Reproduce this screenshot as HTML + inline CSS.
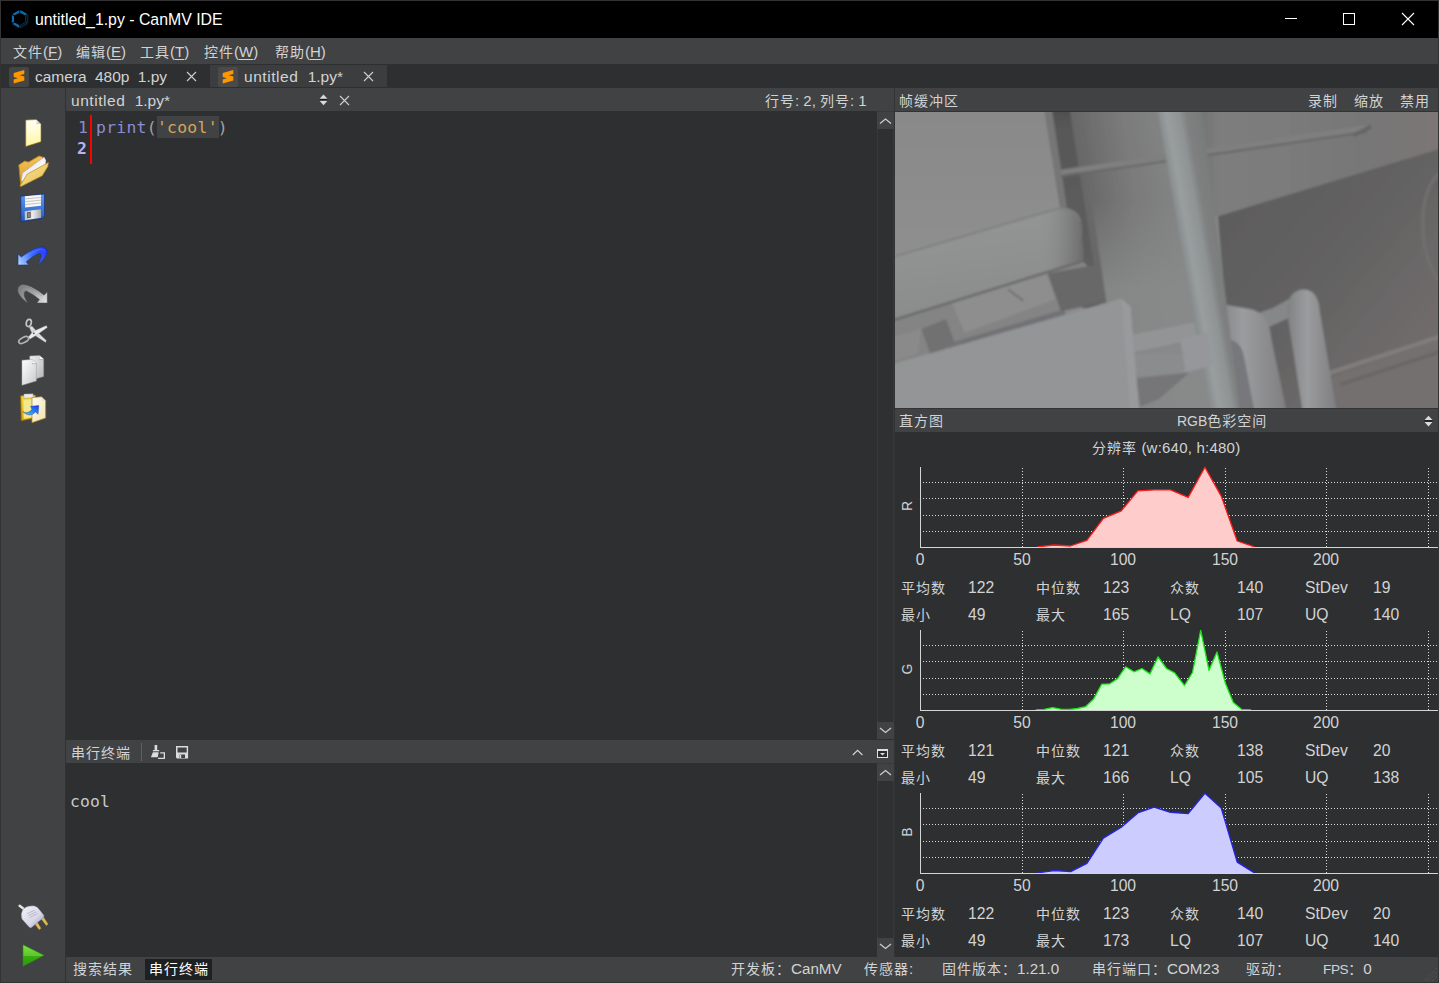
<!DOCTYPE html>
<html lang="zh-CN">
<head>
<meta charset="utf-8">
<title>untitled_1.py - CanMV IDE</title>
<style>
*{box-sizing:border-box;margin:0;padding:0}
html,body{width:1439px;height:983px;overflow:hidden;background:#2e2f30}
body{position:relative;font-family:"Liberation Sans","Noto Sans CJK SC",sans-serif;font-size:14px;color:#d0d0d0}
.abs{position:absolute}
.t{position:absolute;white-space:nowrap;line-height:20px;height:20px;color:#d2d3d4;font-size:15px}
.l{font-size:15.2px}
.mono{font-family:"DejaVu Sans Mono","Liberation Mono",monospace}
#win{position:absolute;left:0;top:0;width:1439px;height:983px;background:#2e2f30;overflow:hidden}
#titlebar{left:1px;top:1px;width:1437px;height:37px;background:#000}
#menubar{left:1px;top:38px;width:1437px;height:26px;background:#404244}
#tabbar{left:1px;top:64px;width:1437px;height:24px;background:#2e2f30}
#sidebar{left:1px;top:88px;width:65px;height:894px;background:#404244;border-right:1px solid #313234}
#edhead{left:66px;top:88px;width:828px;height:23px;background:#404244}
#editor{left:66px;top:111px;width:812px;height:629px;background:#2e2f30}
#termhead{left:66px;top:740px;width:828px;height:23px;background:#404244}
#term{left:66px;top:763px;width:812px;height:194px;background:#2e2f30}
#statusbar{left:66px;top:957px;width:1372px;height:25px;background:#404244}
#fbhead{left:895px;top:88px;width:543px;height:23px;background:#404244}
#fbimg{left:895px;top:112px;width:543px;height:296px;background:#8e8e8e;overflow:hidden}
#histhead{left:895px;top:409px;width:543px;height:23px;background:#404244}
#hist{left:895px;top:432px;width:543px;height:525px;background:#2e2f30}
.n{font-size:15.7px}
.c{font-size:14px;letter-spacing:1px}
.ax{width:60px;text-align:center}
.sb{background:#353637}
u{text-decoration-thickness:1px;text-underline-offset:2px}
</style>
</head>
<body>
<div id="win">
<!-- window frame -->
<div class="abs" style="left:0;top:0;width:1439px;height:983px;background:#333333"></div>
<div class="abs" id="titlebar"></div>
<div class="abs" id="menubar"></div>
<div class="abs" id="tabbar"></div>
<div class="abs" id="sidebar"></div>
<div class="abs" id="edhead"></div>
<div class="abs" id="editor"></div>
<div class="abs" id="termhead"></div>
<div class="abs" id="term"></div>
<div class="abs" id="fbhead"></div>
<div class="abs" id="fbimg"></div>
<div class="abs" id="histhead"></div>
<div class="abs" id="hist"></div>
<div class="abs" id="statusbar"></div>

<!-- TITLE BAR -->
<div class="t" id="title" style="left:35px;top:10px;font-size:15.85px;color:#fff">untitled_1.py - CanMV IDE</div>

<!-- MENU BAR -->
<div class="t" style="left:13px;top:42px"><span class="c">文件</span>(<u>F</u>)</div>
<div class="t" style="left:76px;top:42px"><span class="c">编辑</span>(<u>E</u>)</div>
<div class="t" style="left:140px;top:42px"><span class="c">工具</span>(<u>T</u>)</div>
<div class="t" style="left:204px;top:42px"><span class="c">控件</span>(<u>W</u>)</div>
<div class="t" style="left:275px;top:42px"><span class="c">帮助</span>(<u>H</u>)</div>

<!-- TABS -->
<div class="abs" style="left:210px;top:65px;width:177px;height:22px;background:#3c3d3f"></div>
<div class="abs" style="left:9px;top:67px;width:20px;height:20px;background:#454545;border-radius:2px"></div>
<div class="abs" style="left:218px;top:67px;width:20px;height:20px;background:#4a4a4b;border-radius:2px"></div>
<div class="t" id="tab1" style="left:35px;top:67px;font-size:15.5px;word-spacing:4px">camera 480p 1.py</div>
<div class="t" id="tab2" style="left:244px;top:67px;font-size:15.5px;word-spacing:5px"><span style="letter-spacing:.55px">untitled</span> 1.py*</div>

<!-- EDITOR HEADER -->
<div class="t" id="edname" style="left:71px;top:91px;font-size:15.5px;word-spacing:5px"><span style="letter-spacing:.55px">untitled</span> 1.py*</div>
<div class="t" id="linecol" style="left:765px;top:91px"><span class="c">行号</span>: 2, <span class="c">列号</span>: 1</div>

<!-- EDITOR -->
<div class="abs" style="left:90px;top:115px;width:2px;height:49px;background:#ff0000"></div>
<div class="abs" style="left:157px;top:116px;width:62px;height:22px;background:#414243"></div>
<div class="t mono" id="ln1" style="left:78px;top:117px;font-size:16.4px;line-height:22px;height:22px;color:#8a8ad0">1</div>
<div class="t mono" id="ln2" style="left:77px;top:138px;font-size:16.4px;line-height:22px;height:22px;color:#b4b4f0;font-weight:bold">2</div>
<div class="t mono" id="code" style="left:96px;top:117px;letter-spacing:.28px;font-size:16.4px;line-height:22px;height:22px;color:#8c8cd2">print<span style="color:#a0a2a4">(</span><span style="color:#d9a55a">'cool'</span><span style="color:#a0a2a4">)</span></div>

<!-- scrollbars -->

<!-- TERMINAL -->
<div class="t" id="termttl" style="left:71px;top:743px"><span class="c">串行终端</span></div>
<div class="t mono" id="termout" style="left:70px;top:791px;letter-spacing:.1px;font-size:16.4px;line-height:22px;height:22px;color:#c8c9ca">cool</div>

<!-- BOTTOM TABS / STATUS -->
<div class="abs" style="left:145px;top:959px;width:67px;height:21px;background:#1f2021"></div>
<div class="t" id="bt1" style="left:73px;top:959px"><span class="c">搜索结果</span></div>
<div class="t" id="bt2" style="left:149px;top:959px;color:#fff"><span class="c">串行终端</span></div>
<div class="t" id="st1" style="left:731px;top:959px"><span class="c">开发板：</span><span class="l">CanMV</span></div>
<div class="t" id="st2" style="left:864px;top:959px"><span class="c">传感器</span>:</div>
<div class="t" id="st3" style="left:942px;top:959px"><span class="c">固件版本：</span><span class="l">1.21.0</span></div>
<div class="t" id="st4" style="left:1092px;top:959px"><span class="c">串行端口：</span><span class="l">COM23</span></div>
<div class="t" id="st5" style="left:1246px;top:959px"><span class="c">驱动：</span></div>
<div class="t" id="st6" style="left:1323px;top:959px"><span style="font-size:13.6px;letter-spacing:-.4px">FPS</span><span class="c">：</span><span class="l">0</span></div>

<!-- FRAME BUFFER HEADER -->
<div class="t" id="fbttl" style="left:899px;top:91px"><span class="c">帧缓冲区</span></div>
<div class="t" id="fb1" style="left:1308px;top:91px"><span class="c">录制</span></div>
<div class="t" id="fb2" style="left:1354px;top:91px"><span class="c">缩放</span></div>
<div class="t" id="fb3" style="left:1400px;top:91px"><span class="c">禁用</span></div>

<!-- HISTOGRAM HEADER -->
<div class="t" id="hsttl" style="left:899px;top:411px"><span class="c">直方图</span></div>
<div class="t" id="hscs" style="left:1177px;top:411px"><span style="font-size:14px">RGB</span><span class="c">色彩空间</span></div>
<div class="t" id="hsres" style="left:1092px;top:438px;letter-spacing:.22px"><span class="c">分辨率</span> (w:640, h:480)</div>

<!-- CAM START -->
<!-- CAMERA IMAGE (frame buffer) -->
<svg class="abs" style="left:895px;top:112px" width="543" height="296" viewBox="0 0 1439 784" preserveAspectRatio="none">
<defs>
<filter id="cb" x="-5%" y="-5%" width="110%" height="110%"><feGaussianBlur stdDeviation="3.2"/></filter>
<linearGradient id="cPole" gradientUnits="userSpaceOnUse" x1="693" y1="0" x2="810" y2="-21"><stop offset="0" stop-color="#858a8b"/><stop offset=".2" stop-color="#999e9f"/><stop offset=".5" stop-color="#8f9394"/><stop offset=".64" stop-color="#7f8181"/><stop offset="1" stop-color="#787a7a"/></linearGradient>
<linearGradient id="cPipe" x1="0" y1="0" x2="1" y2="0"><stop offset="0" stop-color="#808183"/><stop offset=".4" stop-color="#9b9c9e"/><stop offset="1" stop-color="#7e7e80"/></linearGradient>
<linearGradient id="cMid" gradientUnits="userSpaceOnUse" x1="466" y1="0" x2="713" y2="-39"><stop offset="0" stop-color="#676767"/><stop offset=".5" stop-color="#7a7a7a"/><stop offset="1" stop-color="#838484"/></linearGradient>
<linearGradient id="cDark" x1="0" y1="0" x2="1" y2="1"><stop offset="0" stop-color="#5a5a5a"/><stop offset=".5" stop-color="#646363"/><stop offset="1" stop-color="#787171"/></linearGradient>
<linearGradient id="cShelf" x1="0" y1="0" x2="1" y2="0"><stop offset="0" stop-color="#6c6c6c"/><stop offset=".12" stop-color="#7e7e7e"/><stop offset=".7" stop-color="#777777"/><stop offset="1" stop-color="#7c7676"/></linearGradient>
<linearGradient id="cBand" x1="0" y1="0" x2="0.25" y2="1"><stop offset="0" stop-color="#959696"/><stop offset=".5" stop-color="#909191"/><stop offset="1" stop-color="#8a8b8b"/></linearGradient>
<linearGradient id="cBandEnd" x1="0" y1="0" x2="1" y2="0"><stop offset="0" stop-color="#909191" stop-opacity="0"/><stop offset="1" stop-color="#6c6c6c"/></linearGradient>
<linearGradient id="cGap" x1="0" y1="0" x2="0" y2="1"><stop offset="0" stop-color="#4c4c4c"/><stop offset=".12" stop-color="#585858"/><stop offset="1" stop-color="#606060"/></linearGradient>
<linearGradient id="cWall" x1="0" y1="0" x2="0" y2="1"><stop offset="0" stop-color="#898989"/><stop offset="1" stop-color="#8f8f8f"/></linearGradient>
<linearGradient id="cMidL" gradientUnits="userSpaceOnUse" x1="0" y1="230" x2="0" y2="470"><stop offset="0" stop-color="#8a8b8b" stop-opacity="0"/><stop offset="1" stop-color="#8a8b8b" stop-opacity=".85"/></linearGradient>
<clipPath id="camClip"><rect x="0" y="0" width="1439" height="784"/></clipPath>
</defs>
<g clip-path="url(#camClip)">
<rect x="0" y="0" width="1439" height="784" fill="#8a8a8a"/>
<g filter="url(#cb)">
<!-- left wall -->
<path d="M-20,-20 L405,-20 L448,260 L-20,395 Z" fill="url(#cWall)"/>
<!-- middle wall -->
<path d="M455,-20 L720,-20 L880,804 L630,804 L540,500 Z" fill="url(#cMid)"/>
<path d="M520,230 L740,230 L850,804 L630,804 L560,500 Z" fill="url(#cMidL)"/>
<!-- gap -->
<path d="M394,-20 L461,-20 L545,520 L497,520 L438,255 Z" fill="url(#cGap)"/>
<path d="M394,-20 L414,-20 L456,255 L438,255 Z" fill="#767676"/>
<!-- shelf upper right -->
<path d="M780,-20 L1460,-20 L1460,92 L856,276 L830,270 Z" fill="url(#cShelf)"/>
<!-- dark region below shelf -->
<path d="M856,276 L1460,92 L1460,804 L900,804 Z" fill="url(#cDark)"/>
<!-- lower-right lighter wedge under ridge -->
<path d="M1160,700 L1460,598 L1460,804 L1100,804 Z" fill="#756f6f"/>
<path d="M1150,692 L1460,590" stroke="#807d7d" stroke-width="12" fill="none"/>
<path d="M1180,722 L1460,630" stroke="#696565" stroke-width="8" fill="none"/>
<!-- cable far right -->
<path d="M1460,150 Q1390,190 1400,330 Q1410,420 1460,470" stroke="#716e6e" stroke-width="9" fill="none"/>
<!-- rod -->
<path d="M440,160 L1250,42" stroke="#7f7f7f" stroke-width="14" fill="none"/>
<path d="M440,171 L1250,53" stroke="#686868" stroke-width="5" fill="none"/>
<path d="M1215,62 L1262,38" stroke="#656565" stroke-width="10" fill="none"/>
<!-- U pipes -->
<path d="M880,596 L960,600 L1000,804 L900,804 Z" fill="#77777b"/>
<path d="M880,560 L1000,520 L1090,470 L1100,520 L900,610 Z" fill="#868789"/>
<path d="M845,505 L940,522 Q992,532 997,600 L1040,804 L955,804 L925,650 Q918,605 880,602 L850,604 Z" fill="url(#cPipe)"/>
<path d="M1039,530 Q1040,470 1085,470 Q1122,472 1126,530 L1172,804 L1082,804 Z" fill="url(#cPipe)"/>
<!-- horizontal pipes to board -->
<path d="M630,590 L800,556 L806,600 L634,636 Z" fill="#939496"/>
<path d="M632,640 L790,640 L792,690 L640,700 Z" fill="#8b8c8e"/>
<path d="M640,705 L780,690 L700,760 L650,780 Z" fill="#767678"/>
<!-- main pole (incl. darker right part) -->
<path d="M693,-20 L812,-20 L916,804 L836,804 Z" fill="url(#cPole)"/>
<!-- clamp -->
<path d="M756,600 L830,585 L842,670 L770,690 Z" fill="#96979a"/>
<!-- mattress band -->
<path d="M-20,390 L430,258 Q488,250 494,300 L498,395 L-20,556 Z" fill="url(#cBand)"/>
<path d="M380,275 L430,258 Q488,250 494,300 L498,395 L380,432 Z" fill="url(#cBandEnd)"/>
<path d="M-20,388 L430,256 Q480,250 492,290" stroke="#7c7c7c" stroke-width="4" fill="none"/>
<!-- sheet -->
<path d="M-20,556 L498,395 L532,432 L540,500 L-20,672 Z" fill="#848484"/>
<path d="M150,505 L400,424 L425,496 L185,585 Z" fill="#8e8e8e"/>
<path d="M-20,600 L70,575 L60,640 L-20,665 Z" fill="#8a8a8a"/>
<path d="M70,575 L135,548 L160,615 L95,645 Z" fill="#717171"/>
<path d="M140,622 L450,530" stroke="#727276" stroke-width="16" fill="none"/>
<path d="M405,428 L530,405 L542,505 L440,528 Z" fill="#676767"/>
<path d="M300,470 L340,500" stroke="#707070" stroke-width="5" fill="none"/>
<path d="M-20,556 L498,395" stroke="#6c6c6c" stroke-width="7" fill="none"/>
<!-- board -->
<path d="M-20,672 L600,494 L624,516 L648,804 L-20,804 Z" fill="#939596"/>
<path d="M600,494 L624,516 L648,804 L624,804 Z" fill="#999a9c"/>
</g>
</g>
</svg>
<!-- CAM END -->

<!-- HIST START -->
<svg class="abs" style="left:895px;top:432px" width="543" height="525" viewBox="895 432 543 525" shape-rendering="crispEdges">
<line x1="923" y1="482.5" x2="1438" y2="482.5" stroke="#dcdcdc" stroke-width="1" stroke-dasharray="1 2"/>
<line x1="923" y1="498.5" x2="1438" y2="498.5" stroke="#dcdcdc" stroke-width="1" stroke-dasharray="1 2"/>
<line x1="923" y1="515.5" x2="1438" y2="515.5" stroke="#dcdcdc" stroke-width="1" stroke-dasharray="1 2"/>
<line x1="923" y1="531.5" x2="1438" y2="531.5" stroke="#dcdcdc" stroke-width="1" stroke-dasharray="1 2"/>
<line x1="1022.5" y1="468" x2="1022.5" y2="547" stroke="#dcdcdc" stroke-width="1" stroke-dasharray="1 2"/>
<line x1="1123.5" y1="468" x2="1123.5" y2="547" stroke="#dcdcdc" stroke-width="1" stroke-dasharray="1 2"/>
<line x1="1225.5" y1="468" x2="1225.5" y2="547" stroke="#dcdcdc" stroke-width="1" stroke-dasharray="1 2"/>
<line x1="1326.5" y1="468" x2="1326.5" y2="547" stroke="#dcdcdc" stroke-width="1" stroke-dasharray="1 2"/>
<line x1="1428.5" y1="468" x2="1428.5" y2="547" stroke="#dcdcdc" stroke-width="1" stroke-dasharray="1 2"/>
<path d="M1037.4,546.9 L1054.2,545.0 L1070.4,546.0 L1086.9,540.3 L1103.4,518.4 L1121.3,510.9 L1137.8,490.8 L1154.1,489.9 L1170.5,489.9 L1188.2,497.4 L1204.9,467.3 L1221.2,496.1 L1237.2,541.0 L1254.5,546.9 Z" fill="#ffcccc" stroke="none" shape-rendering="geometricPrecision"/>
<path d="M1037.4,546.9 L1054.2,545.0 L1070.4,546.0 L1086.9,540.3 L1103.4,518.4 L1121.3,510.9 L1137.8,490.8 L1154.1,489.9 L1170.5,489.9 L1188.2,497.4 L1204.9,467.3 L1221.2,496.1 L1237.2,541.0 L1254.5,546.9" fill="none" stroke="#ff1a1a" stroke-width="1.3" stroke-linejoin="round" shape-rendering="geometricPrecision"/>
<rect x="920" y="467" width="1" height="81" fill="#d4d4d4"/>
<rect x="920" y="547" width="518" height="1" fill="#d4d4d4"/>
<line x1="923" y1="645.5" x2="1438" y2="645.5" stroke="#dcdcdc" stroke-width="1" stroke-dasharray="1 2"/>
<line x1="923" y1="661.5" x2="1438" y2="661.5" stroke="#dcdcdc" stroke-width="1" stroke-dasharray="1 2"/>
<line x1="923" y1="678.5" x2="1438" y2="678.5" stroke="#dcdcdc" stroke-width="1" stroke-dasharray="1 2"/>
<line x1="923" y1="694.5" x2="1438" y2="694.5" stroke="#dcdcdc" stroke-width="1" stroke-dasharray="1 2"/>
<line x1="1022.5" y1="631" x2="1022.5" y2="710" stroke="#dcdcdc" stroke-width="1" stroke-dasharray="1 2"/>
<line x1="1123.5" y1="631" x2="1123.5" y2="710" stroke="#dcdcdc" stroke-width="1" stroke-dasharray="1 2"/>
<line x1="1225.5" y1="631" x2="1225.5" y2="710" stroke="#dcdcdc" stroke-width="1" stroke-dasharray="1 2"/>
<line x1="1326.5" y1="631" x2="1326.5" y2="710" stroke="#dcdcdc" stroke-width="1" stroke-dasharray="1 2"/>
<line x1="1428.5" y1="631" x2="1428.5" y2="710" stroke="#dcdcdc" stroke-width="1" stroke-dasharray="1 2"/>
<path d="M1035.6,709.9 L1044.3,709.3 L1052.5,707.6 L1060.8,709.2 L1069.2,709.5 L1077.3,708.5 L1085.5,706.7 L1093.7,698.9 L1101.7,684.2 L1109.8,683.8 L1117.6,678.6 L1125.6,666.8 L1134.0,671.8 L1142.0,668.5 L1150.0,673.9 L1158.1,656.9 L1166.5,668.5 L1174.6,672.9 L1184.5,685.5 L1192.5,672.5 L1200.7,630.3 L1209.0,670.3 L1217.0,652.0 L1225.4,683.3 L1233.3,702.4 L1241.5,709.3 L1251.1,709.9 Z" fill="#ccffcc" stroke="none" shape-rendering="geometricPrecision"/>
<path d="M1035.6,709.9 L1044.3,709.3 L1052.5,707.6 L1060.8,709.2 L1069.2,709.5 L1077.3,708.5 L1085.5,706.7 L1093.7,698.9 L1101.7,684.2 L1109.8,683.8 L1117.6,678.6 L1125.6,666.8 L1134.0,671.8 L1142.0,668.5 L1150.0,673.9 L1158.1,656.9 L1166.5,668.5 L1174.6,672.9 L1184.5,685.5 L1192.5,672.5 L1200.7,630.3 L1209.0,670.3 L1217.0,652.0 L1225.4,683.3 L1233.3,702.4 L1241.5,709.3 L1251.1,709.9" fill="none" stroke="#19e619" stroke-width="1.3" stroke-linejoin="round" shape-rendering="geometricPrecision"/>
<rect x="920" y="630" width="1" height="81" fill="#d4d4d4"/>
<rect x="920" y="710" width="518" height="1" fill="#d4d4d4"/>
<line x1="923" y1="808.5" x2="1438" y2="808.5" stroke="#dcdcdc" stroke-width="1" stroke-dasharray="1 2"/>
<line x1="923" y1="824.5" x2="1438" y2="824.5" stroke="#dcdcdc" stroke-width="1" stroke-dasharray="1 2"/>
<line x1="923" y1="841.5" x2="1438" y2="841.5" stroke="#dcdcdc" stroke-width="1" stroke-dasharray="1 2"/>
<line x1="923" y1="857.5" x2="1438" y2="857.5" stroke="#dcdcdc" stroke-width="1" stroke-dasharray="1 2"/>
<line x1="1022.5" y1="794" x2="1022.5" y2="873" stroke="#dcdcdc" stroke-width="1" stroke-dasharray="1 2"/>
<line x1="1123.5" y1="794" x2="1123.5" y2="873" stroke="#dcdcdc" stroke-width="1" stroke-dasharray="1 2"/>
<line x1="1225.5" y1="794" x2="1225.5" y2="873" stroke="#dcdcdc" stroke-width="1" stroke-dasharray="1 2"/>
<line x1="1326.5" y1="794" x2="1326.5" y2="873" stroke="#dcdcdc" stroke-width="1" stroke-dasharray="1 2"/>
<line x1="1428.5" y1="794" x2="1428.5" y2="873" stroke="#dcdcdc" stroke-width="1" stroke-dasharray="1 2"/>
<path d="M1037.4,872.9 L1054.2,870.6 L1070.7,871.6 L1086.9,863.3 L1103.4,838.1 L1121.3,827.3 L1137.8,812.9 L1154.1,807.2 L1170.5,812.4 L1188.2,813.6 L1204.9,793.3 L1221.2,808.1 L1237.2,862.1 L1254.5,872.9 Z" fill="#ccccff" stroke="none" shape-rendering="geometricPrecision"/>
<path d="M1037.4,872.9 L1054.2,870.6 L1070.7,871.6 L1086.9,863.3 L1103.4,838.1 L1121.3,827.3 L1137.8,812.9 L1154.1,807.2 L1170.5,812.4 L1188.2,813.6 L1204.9,793.3 L1221.2,808.1 L1237.2,862.1 L1254.5,872.9" fill="none" stroke="#2222ee" stroke-width="1.3" stroke-linejoin="round" shape-rendering="geometricPrecision"/>
<rect x="920" y="793" width="1" height="81" fill="#d4d4d4"/>
<rect x="920" y="873" width="518" height="1" fill="#d4d4d4"/>
</svg>
<div class="t" style="left:897px;top:496px;width:20px;text-align:center;transform:rotate(-90deg);font-size:14px">R</div>
<div class="t ax n" style="left:890px;top:550px">0</div>
<div class="t ax n" style="left:992px;top:550px">50</div>
<div class="t ax n" style="left:1093px;top:550px">100</div>
<div class="t ax n" style="left:1195px;top:550px">150</div>
<div class="t ax n" style="left:1296px;top:550px">200</div>
<div class="t" style="left:897px;top:659px;width:20px;text-align:center;transform:rotate(-90deg);font-size:14px">G</div>
<div class="t ax n" style="left:890px;top:713px">0</div>
<div class="t ax n" style="left:992px;top:713px">50</div>
<div class="t ax n" style="left:1093px;top:713px">100</div>
<div class="t ax n" style="left:1195px;top:713px">150</div>
<div class="t ax n" style="left:1296px;top:713px">200</div>
<div class="t" style="left:897px;top:822px;width:20px;text-align:center;transform:rotate(-90deg);font-size:14px">B</div>
<div class="t ax n" style="left:890px;top:876px">0</div>
<div class="t ax n" style="left:992px;top:876px">50</div>
<div class="t ax n" style="left:1093px;top:876px">100</div>
<div class="t ax n" style="left:1195px;top:876px">150</div>
<div class="t ax n" style="left:1296px;top:876px">200</div>
<div class="t" style="left:901px;top:578px"><span class="c">平均数</span></div>
<div class="t n" style="left:968px;top:578px">122</div>
<div class="t" style="left:901px;top:605px"><span class="c">最小</span></div>
<div class="t n" style="left:968px;top:605px">49</div>
<div class="t" style="left:1036px;top:578px"><span class="c">中位数</span></div>
<div class="t n" style="left:1103px;top:578px">123</div>
<div class="t" style="left:1036px;top:605px"><span class="c">最大</span></div>
<div class="t n" style="left:1103px;top:605px">165</div>
<div class="t" style="left:1170px;top:578px"><span class="c">众数</span></div>
<div class="t n" style="left:1237px;top:578px">140</div>
<div class="t n" style="left:1170px;top:605px">LQ</div>
<div class="t n" style="left:1237px;top:605px">107</div>
<div class="t n" style="left:1305px;top:578px">StDev</div>
<div class="t n" style="left:1373px;top:578px">19</div>
<div class="t n" style="left:1305px;top:605px">UQ</div>
<div class="t n" style="left:1373px;top:605px">140</div>
<div class="t" style="left:901px;top:741px"><span class="c">平均数</span></div>
<div class="t n" style="left:968px;top:741px">121</div>
<div class="t" style="left:901px;top:768px"><span class="c">最小</span></div>
<div class="t n" style="left:968px;top:768px">49</div>
<div class="t" style="left:1036px;top:741px"><span class="c">中位数</span></div>
<div class="t n" style="left:1103px;top:741px">121</div>
<div class="t" style="left:1036px;top:768px"><span class="c">最大</span></div>
<div class="t n" style="left:1103px;top:768px">166</div>
<div class="t" style="left:1170px;top:741px"><span class="c">众数</span></div>
<div class="t n" style="left:1237px;top:741px">138</div>
<div class="t n" style="left:1170px;top:768px">LQ</div>
<div class="t n" style="left:1237px;top:768px">105</div>
<div class="t n" style="left:1305px;top:741px">StDev</div>
<div class="t n" style="left:1373px;top:741px">20</div>
<div class="t n" style="left:1305px;top:768px">UQ</div>
<div class="t n" style="left:1373px;top:768px">138</div>
<div class="t" style="left:901px;top:904px"><span class="c">平均数</span></div>
<div class="t n" style="left:968px;top:904px">122</div>
<div class="t" style="left:901px;top:931px"><span class="c">最小</span></div>
<div class="t n" style="left:968px;top:931px">49</div>
<div class="t" style="left:1036px;top:904px"><span class="c">中位数</span></div>
<div class="t n" style="left:1103px;top:904px">123</div>
<div class="t" style="left:1036px;top:931px"><span class="c">最大</span></div>
<div class="t n" style="left:1103px;top:931px">173</div>
<div class="t" style="left:1170px;top:904px"><span class="c">众数</span></div>
<div class="t n" style="left:1237px;top:904px">140</div>
<div class="t n" style="left:1170px;top:931px">LQ</div>
<div class="t n" style="left:1237px;top:931px">107</div>
<div class="t n" style="left:1305px;top:904px">StDev</div>
<div class="t n" style="left:1373px;top:904px">20</div>
<div class="t n" style="left:1305px;top:931px">UQ</div>
<div class="t n" style="left:1373px;top:931px">140</div>
<!-- HIST END -->

<!-- ICONS START -->
<!-- SIDEBAR ICONS -->
<svg class="abs" style="left:9px;top:112px" width="48" height="120" viewBox="0 0 393 983">
<defs>
<linearGradient id="gNew" x1="0" y1="0" x2="0" y2="1"><stop offset="0" stop-color="#fffff6"/><stop offset=".5" stop-color="#fffbd0"/><stop offset="1" stop-color="#fdf5a2"/></linearGradient>
<linearGradient id="gFold" x1="0" y1="0" x2="1" y2="1"><stop offset="0" stop-color="#f4f4ee"/><stop offset="1" stop-color="#b9b9b2"/></linearGradient>
<linearGradient id="gFoBack" x1="0" y1="0" x2="0" y2="1"><stop offset="0" stop-color="#f2c35a"/><stop offset="1" stop-color="#dc9a2c"/></linearGradient>
<linearGradient id="gFoFront" x1="0" y1="0" x2="1" y2="1"><stop offset="0" stop-color="#f5e08e"/><stop offset="1" stop-color="#e6c258"/></linearGradient>
<linearGradient id="gPaper" x1="0" y1="0" x2="1" y2="1"><stop offset="0" stop-color="#c9cad4"/><stop offset=".5" stop-color="#f4f4f8"/><stop offset="1" stop-color="#ffffff"/></linearGradient>
<linearGradient id="gSave" x1="0" y1="0" x2="0" y2="1"><stop offset="0" stop-color="#5b9af0"/><stop offset="1" stop-color="#2359bd"/></linearGradient>
<linearGradient id="gShut" x1="0" y1="0" x2="1" y2="0"><stop offset="0" stop-color="#bdbdbd"/><stop offset=".5" stop-color="#ececec"/><stop offset="1" stop-color="#a9a9a9"/></linearGradient>
</defs>
<!-- new -->
<path d="M137,66 L222,62 L262,98 L262,243 L137,283 Z" fill="url(#gNew)" stroke="#a0700e" stroke-width="5" stroke-linejoin="round"/>
<path d="M222,64 L224,101 L260,99 Z" fill="url(#gFold)"/>
<!-- open -->
<path d="M80,434 L128,402 L160,410 L246,360 L276,368 L276,470 L96,602 Z" fill="url(#gFoBack)" stroke="#b57a12" stroke-width="7" stroke-linejoin="round"/>
<path d="M110,500 L288,368 L302,396 L298,440 L128,566 L100,568 Z" fill="url(#gPaper)" stroke="#9a9aa6" stroke-width="3"/>
<path d="M90,604 L150,508 L322,414 L318,446 L272,522 L98,610 Z" fill="url(#gFoFront)" stroke="#c28c1c" stroke-width="6" stroke-linejoin="round"/>
<!-- save -->
<path d="M96,690 L290,672 L292,850 L270,872 L98,900 Z" fill="url(#gSave)" stroke="#1b2f78" stroke-width="6" stroke-linejoin="round"/>
<path d="M130,690 L262,678 L262,768 L132,782 Z" fill="#f6f6f6"/>
<path d="M132,712 L262,700 M132,735 L262,722 M132,758 L262,745" stroke="#a8a8a8" stroke-width="5" fill="none"/>
<path d="M128,812 L262,796 L262,866 L130,886 Z" fill="url(#gShut)"/>
<path d="M148,822 L178,818 L178,866 L148,870 Z" fill="#5a5a5a"/>
<path d="M156,828 L170,826 L170,860 L156,862 Z" fill="#8c8c8c"/>
</svg>

<svg class="abs" style="left:9px;top:236px" width="48" height="120" viewBox="0 0 393 983">
<defs>
<linearGradient id="gUndo" x1="1" y1="0" x2="0" y2="1"><stop offset="0" stop-color="#1f3cff"/><stop offset=".55" stop-color="#3f7bff"/><stop offset="1" stop-color="#a8d6ff"/></linearGradient>
<linearGradient id="gRedo" x1="0" y1="0" x2="1" y2="1"><stop offset="0" stop-color="#7d7d7d"/><stop offset=".55" stop-color="#a9a9a9"/><stop offset="1" stop-color="#e2e2e2"/></linearGradient>
<linearGradient id="gSc" x1="0" y1="0" x2="1" y2="1"><stop offset="0" stop-color="#f2f2f2"/><stop offset="1" stop-color="#9c9c9c"/></linearGradient>
</defs>
<!-- scissors -->
<g fill="none" stroke-linecap="round">
<ellipse cx="162" cy="712" rx="20" ry="30" stroke="#c4c4c4" stroke-width="14" transform="rotate(14 162 712)"/>
<ellipse cx="120" cy="852" rx="44" ry="21" stroke="#b2b2b2" stroke-width="14" transform="rotate(-27 120 852)"/>
</g>
<path d="M166,748 L190,800 L300,872 L306,856 L222,776 L188,738 Z" fill="#dedede" stroke="#8a8a8a" stroke-width="3"/>
<path d="M160,826 L196,782 L306,734 L314,750 L224,812 L170,846 Z" fill="#ececec" stroke="#8a8a8a" stroke-width="3"/>
<circle cx="203" cy="797" r="7" fill="#444"/>
</svg>

<svg class="abs" style="left:12px;top:240px" width="42" height="70" viewBox="0 0 590 983">
<defs>
<linearGradient id="gUndo2" gradientUnits="userSpaceOnUse" x1="480" y1="90" x2="90" y2="350"><stop offset="0" stop-color="#2030ff"/><stop offset=".5" stop-color="#3b6cff"/><stop offset="1" stop-color="#b4dcff"/></linearGradient>
<linearGradient id="gRedo2" gradientUnits="userSpaceOnUse" x1="100" y1="620" x2="490" y2="885"><stop offset="0" stop-color="#7a7a7a"/><stop offset=".5" stop-color="#a4a4a4"/><stop offset="1" stop-color="#e6e6e6"/></linearGradient>
</defs>
<path d="M85,195 L85,350 L235,350 L200,305 Q290,225 375,188 Q420,180 405,250 Q390,310 350,355 Q450,290 490,200 Q510,120 440,95 Q330,85 130,240 Z" fill="url(#gUndo2)" stroke="#1d2a66" stroke-width="7" stroke-linejoin="round"/>
<path d="M150,262 Q290,160 400,128 Q455,125 462,170" fill="none" stroke="#7fa6ff" stroke-width="10" opacity=".55"/>
<path d="M495,730 L495,885 L350,885 L385,835 Q295,762 205,718 Q165,712 172,785 Q190,845 225,885 Q125,825 85,735 Q65,650 140,625 Q250,615 450,775 Z" fill="url(#gRedo2)" stroke="#4e4e4e" stroke-width="7" stroke-linejoin="round"/>
<path d="M120,700 Q130,650 190,655 Q300,680 430,790" fill="none" stroke="#6e6e6e" stroke-width="10" opacity=".5"/>
</svg>
<svg class="abs" style="left:9px;top:346px" width="48" height="120" viewBox="0 0 393 983">
<defs>
<linearGradient id="gCp" x1="0" y1="0" x2="1" y2="1"><stop offset="0" stop-color="#ffffff"/><stop offset="1" stop-color="#c9c9c9"/></linearGradient>
<linearGradient id="gCp2" x1="0" y1="0" x2="1" y2="1"><stop offset="0" stop-color="#f0f0f0"/><stop offset="1" stop-color="#b5b5b5"/></linearGradient>
<linearGradient id="gClip" x1="0" y1="0" x2="0" y2="1"><stop offset="0" stop-color="#f7dc3a"/><stop offset="1" stop-color="#d8a00e"/></linearGradient>
<linearGradient id="gPg" x1="0" y1="0" x2="1" y2="1"><stop offset="0" stop-color="#fffdf0"/><stop offset="1" stop-color="#efe2ae"/></linearGradient>
<linearGradient id="gArr" x1="0" y1="1" x2="1" y2="0"><stop offset="0" stop-color="#3fd0ff"/><stop offset="1" stop-color="#1a3cf0"/></linearGradient>
</defs>
<!-- copy -->
<path d="M170,82 L250,78 L284,106 L284,250 L172,282 Z" fill="url(#gCp2)" stroke="#8f8f8f" stroke-width="4" stroke-linejoin="round"/>
<path d="M250,80 L250,116 L284,114 Z" fill="#a8a8a8"/><path d="M250,80 L252,108 L282,107 Z" fill="#fbfbfb"/>
<path d="M106,116 L190,110 L224,140 L224,286 L106,322 Z" fill="url(#gCp)" stroke="#9a9a9a" stroke-width="4" stroke-linejoin="round"/>
<path d="M190,112 L190,150 L224,148 Z" fill="#b0b0b0"/><path d="M190,112 L192,142 L222,141 Z" fill="#fafafa"/>
<!-- paste -->
<path d="M96,408 L216,402 L216,590 L100,612 Z" fill="url(#gClip)" stroke="#9a6a08" stroke-width="7" stroke-linejoin="round"/>
<path d="M118,440 L196,436 L196,584 L120,598 Z" fill="#f3e88c"/>
<path d="M122,394 L198,392 L198,424 L122,428 Z" fill="#ececec" stroke="#8a8a8a" stroke-width="3"/>
<path d="M188,422 L266,416 L300,446 L300,590 L188,628 Z" fill="url(#gPg)" stroke="#ae8224" stroke-width="6" stroke-linejoin="round"/>
<path d="M266,418 L268,448 L298,447 Z" fill="#e2dccc"/>
<path d="M112,538 Q150,560 190,520 L176,494 L244,488 L238,560 L218,540 Q170,592 112,538 Z" fill="url(#gArr)" stroke="#1b2f8a" stroke-width="3" stroke-linejoin="round"/>
</svg>

<svg class="abs" style="left:9px;top:890px" width="48" height="93" viewBox="0 0 507 982">
<defs>
<linearGradient id="gPlug" x1="0" y1="0" x2="1" y2="1"><stop offset="0" stop-color="#f4f4fa"/><stop offset=".6" stop-color="#d6d6e6"/><stop offset="1" stop-color="#8e8eaa"/></linearGradient>
<linearGradient id="gRun" x1="0" y1="0" x2="0" y2="1"><stop offset="0" stop-color="#7fe04a"/><stop offset=".5" stop-color="#5cc82a"/><stop offset=".52" stop-color="#3aae10"/><stop offset="1" stop-color="#2c960a"/></linearGradient>
</defs>
<!-- plug -->
<path d="M112,166 L150,196" stroke="#e2e2e6" stroke-width="26" stroke-linecap="round"/>
<path d="M262,344 L318,420 L338,404 L292,326 Z" fill="#e0bd5c" stroke="#a8862c" stroke-width="4"/>
<path d="M336,302 L396,378 L412,358 L364,284 Z" fill="#e0bd5c" stroke="#a8862c" stroke-width="4"/>
<path d="M150,200 Q200,160 270,168 Q300,172 322,208 L370,268 L366,290 L232,402 L214,394 L136,306 Q118,250 150,200 Z" fill="url(#gPlug)" stroke="#7a7a92" stroke-width="4" stroke-linejoin="round"/>
<path d="M190,250 L270,214 M204,270 L286,232 M218,290 L300,250" stroke="#9c9cae" stroke-width="6"/>
<!-- run -->
<path d="M148,578 L148,806 L370,690 Z" fill="url(#gRun)" stroke="#2a8a0a" stroke-width="6" stroke-linejoin="round"/>
</svg>
<!-- ICONS END -->

<!-- UI START -->
<!-- TITLE ICON + WINDOW CONTROLS -->
<svg class="abs" style="left:0;top:1px" width="40" height="37" viewBox="0 1 40 37">
<polygon points="20.36,10.12 27.21,14.08 25.12,15.47 20.20,12.63" fill="#1069a8"/>
<polygon points="27.77,15.04 27.77,22.96 25.52,21.84 25.52,16.16" fill="#02121d" stroke="#0b3f63" stroke-width=".7"/>
<polygon points="27.21,23.92 20.36,27.88 20.20,25.37 25.12,22.53" fill="#02121d" stroke="#0b3f63" stroke-width=".7"/>
<polygon points="19.24,27.88 12.39,23.92 14.48,22.53 19.40,25.37" fill="#1069a8"/>
<polygon points="11.83,22.96 11.83,15.04 14.08,16.16 14.08,21.84" fill="#1069a8"/>
<polygon points="12.39,14.08 19.24,10.12 19.40,12.63 14.48,15.47" fill="#1069a8"/>
</svg>
<svg class="abs" style="left:1280px;top:8px" width="140" height="24" viewBox="1280 8 140 24" shape-rendering="crispEdges">
<rect x="1285" y="18" width="12" height="1" fill="#fff"/>
<rect x="1343.5" y="13.500" width="11" height="11" fill="none" stroke="#fff" stroke-width="1"/>
<path d="M1402,13 L1414,25 M1414,13 L1402,25" stroke="#fff" stroke-width="1.1" shape-rendering="geometricPrecision"/>
</svg>

<!-- TAB ICONS + CLOSE -->
<svg class="abs" style="left:0;top:64px" width="400" height="48" viewBox="0 64 400 48">
<g transform="translate(13.7,70)"><path d="M0.00,3.10 L10.60,0.00 L10.60,3.91 L5.83,5.32 L10.60,6.48 L10.60,10.39 L0.00,13.50 L0.00,9.58 L4.20,8.36 L0.00,7.02 Z" fill="#ff9800"/></g>
<g transform="translate(222.7,70)"><path d="M0.00,3.10 L10.60,0.00 L10.60,3.91 L5.83,5.32 L10.60,6.48 L10.60,10.39 L0.00,13.50 L0.00,9.58 L4.20,8.36 L0.00,7.02 Z" fill="#ff9800"/></g>
<g transform="translate(191.5,76.5)"><path d="M-4.5,-4.5 L4.5,4.5 M4.5,-4.5 L-4.5,4.500" stroke="#cfcfcf" stroke-width="1.1" fill="none"/></g>
<g transform="translate(368.5,76.5)"><path d="M-4.5,-4.5 L4.5,4.5 M4.5,-4.5 L-4.5,4.500" stroke="#cfcfcf" stroke-width="1.1" fill="none"/></g>
<g transform="translate(323.5,100.3)"><path d="M-4,-1.5 L0,-5.7 L4,-1.5 Z M-4,0.5 L0,4.9 L4,0.5 Z" fill="#dadada"/><rect x="-4" y="-1.3" width="8" height="1.4" fill="#1c1c1c"/></g>
<g transform="translate(344.5,100.5)"><path d="M-4.5,-4.5 L4.5,4.5 M4.5,-4.5 L-4.5,4.500" stroke="#cfcfcf" stroke-width="1.1" fill="none"/></g>
</svg>
<svg class="abs" style="left:1418px;top:409px" width="20" height="23" viewBox="1418 409 20 23">
<path d="M1424.500,420 L1428.500,415.800 L1432.500,420 Z M1424.500,422 L1428.500,426.600 L1432.500,422 Z" fill="#dadada"/><rect x="1424.500" y="420.200" width="8" height="1.500" fill="#1c1c1c"/>
</svg>

<!-- SCROLLBARS -->
<svg class="abs" style="left:877px;top:111px" width="18" height="846" viewBox="877 111 18 846">
<rect x="877" y="111" width="17" height="629" fill="#38393b"/>
<rect x="878" y="129" width="15" height="593" fill="#2f3031"/>
<rect x="877" y="112" width="17" height="17" fill="#404244"/>
<rect x="877" y="722" width="17" height="17" fill="#404244"/>
<rect x="877" y="739" width="17" height="1" fill="#2e2f30"/>
<rect x="877" y="763" width="17" height="194" fill="#38393b"/>
<rect x="878" y="781" width="15" height="157" fill="#2f3031"/>
<rect x="877" y="764" width="17" height="17" fill="#404244"/>
<rect x="877" y="938" width="17" height="19" fill="#404244"/>
<g fill="none" stroke="#cfcfcf" stroke-width="1.2">
<path d="M880,123.500 L885.500,119 L891,123.500"/>
<path d="M880,728 L885.500,732.500 L891,728"/>
<path d="M880,775 L885.500,770.500 L891,775"/>
<path d="M880,944 L885.500,948.500 L891,944"/>
</g>
</svg>

<!-- TERMINAL HEADER ICONS -->
<svg class="abs" style="left:140px;top:740px" width="60" height="23" viewBox="140 740 60 23">
<rect x="141" y="743" width="1" height="18" fill="#5e6062"/>
<g fill="#dcdcdc">
<rect x="154.600" y="745" width="2.600" height="5"/>
<rect x="152.900" y="750" width="6.300" height="1.300"/>
<path d="M152.900,752.300 L158.700,752.300 L157.700,757.200 L150.900,757.200 Z"/>
<path d="M160.200,752.300 L165,752.300 L165,759 L158,759 L158,757.800 L163.700,757.800 L163.700,753.600 L160.200,753.600 Z"/>
<path d="M176,746 L188.100,746 L188.100,758.400 L177,758.400 L176,757.400 Z M177.500,747.500 L177.500,752.500 L186.700,752.500 L186.700,747.500 Z M179.600,754.500 L179.600,758 L185,758 L185,754.500 Z" fill-rule="evenodd"/>
<rect x="179.900" y="754.600" width="1.300" height="3.400"/>
</g>
</svg>
<svg class="abs" style="left:848px;top:744px" width="44" height="18" viewBox="848 744 44 18">
<path d="M852.800,755 L857.600,750.300 L862.400,755" fill="none" stroke="#d4d4d4" stroke-width="1.2"/>
<rect x="877.500" y="749.500" width="10" height="8" fill="#2c2d2e" stroke="#e0e0e0" stroke-width="1" shape-rendering="crispEdges"/>
<rect x="877" y="749" width="11" height="2" fill="#e0e0e0" shape-rendering="crispEdges"/>
<path d="M880,753 L885,753 L882.500,755.600 Z" fill="#e0e0e0"/>
</svg>

<!-- SIZE GRIP -->
<svg class="abs" style="left:1422px;top:966px" width="16" height="16" viewBox="0 0 16 16">
<path d="M15,2 L2,15 M15,6 L6,15 M15,10 L10,15" stroke="#56585a" stroke-width="1" stroke-dasharray="1 1" fill="none"/>
</svg>
<!-- UI END -->

</div>
</body>
</html>
